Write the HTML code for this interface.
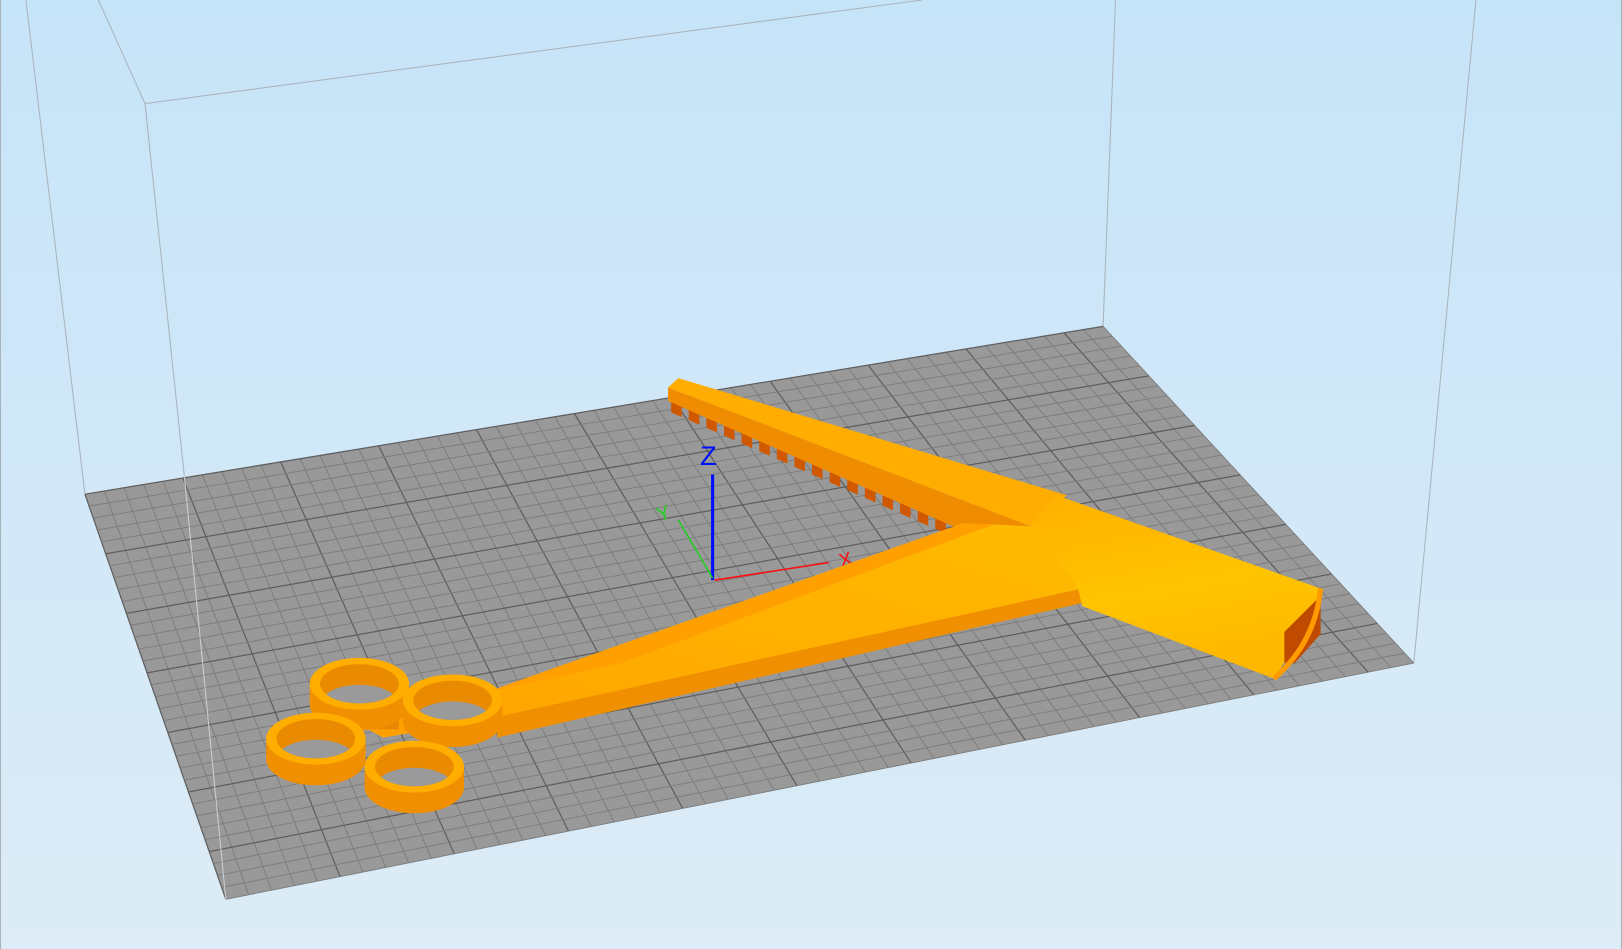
<!DOCTYPE html>
<html><head><meta charset="utf-8"><style>
html,body{margin:0;padding:0;width:1622px;height:949px;overflow:hidden}
svg{display:block}
</style></head><body>
<svg id="s" width="1622" height="949" viewBox="0 0 1566 916" preserveAspectRatio="none" xmlns="http://www.w3.org/2000/svg">
<defs>
<linearGradient id="bg" x1="0" y1="0" x2="0" y2="1"><stop offset="0" stop-color="#c6e4f8"/><stop offset="1" stop-color="#ddecf7"/></linearGradient>
<linearGradient id="cyl" x1="0" y1="0" x2="0.3" y2="1"><stop offset="0" stop-color="#ffb000"/><stop offset="0.6" stop-color="#ffc400"/><stop offset="1" stop-color="#ffb800"/></linearGradient>
<linearGradient id="arm" x1="0" y1="1" x2="1" y2="0"><stop offset="0" stop-color="#ffa600"/><stop offset="1" stop-color="#ffbb00"/></linearGradient>
</defs>
<rect width="1566" height="916" fill="url(#bg)"/>
<g stroke="#a8b4bc" stroke-width="1" fill="none">
<line x1="95" y1="0" x2="140" y2="100"/>
<line x1="140" y1="100" x2="890" y2="0"/>
<line x1="1077" y1="0" x2="1065" y2="315"/>
<line x1="1425" y1="0" x2="1365" y2="640"/>
<line x1="25" y1="0" x2="82" y2="477"/>
<line x1="140" y1="100" x2="178" y2="460"/>
<line x1="0.5" y1="0" x2="0.5" y2="916"/>
<line x1="1565.5" y1="0" x2="1565.5" y2="916"/>
</g>
<polygon points="82,477 1065,315 1365,640 218,868" fill="#999"/>
<g id="grid"></g>
<line x1="178" y1="460" x2="218" y2="868" stroke="#c8d0d6" stroke-width="1"/>
<!-- axes -->
<line x1="688" y1="458" x2="688" y2="560" stroke="#0010ff" stroke-width="3"/>
<text x="676" y="449" font-family="Liberation Sans, sans-serif" font-size="26" fill="#0010ff">Z</text>
<line x1="690" y1="560" x2="800" y2="543" stroke="#ff1010" stroke-width="1.5"/>
<text x="812" y="548" font-family="Liberation Sans, sans-serif" font-size="19" fill="#ff1010" transform="rotate(-15 812 548)">X</text>
<line x1="688" y1="558" x2="655" y2="502" stroke="#20d020" stroke-width="1.5"/>
<text x="634" y="502" font-family="Liberation Sans, sans-serif" font-size="19" fill="#20d020" transform="rotate(-20 640 495)">Y</text>
<!-- upper arm -->
<polygon id="teeth" fill="#d05800"/>
<polygon points="645,374 645,387 920,508 995,508" fill="#f08c00"/>
<polygon points="645,374 655,365 1030,478 995,508" fill="#ffad00"/>
<!-- lower arm -->
<polygon points="480,690 1045,568 1045,582 480,712" fill="#f09000"/>
<polygon points="470,668 930,505 995,508 1045,568 480,692" fill="url(#arm)"/>
<polygon points="470,668 930,505 960,506 600,640" fill="#ff9f00"/>
<!-- cylinder -->
<polygon points="995,508 1020,478 1275,568 1265,600 1230,655 1045,585 1040,565" fill="url(#cyl)"/>
<polygon points="1240,610 1275,575 1275,612 1250,640 1240,640" fill="#c04a00"/>
<path d="M1275,568 Q1270,620 1230,655" stroke="#ff9a00" stroke-width="5" fill="none"/>
<g id="rings"></g>
</svg>
<script>
var ns="http://www.w3.org/2000/svg",s=document.getElementById('s');
function el(p,t,a){var e=document.createElementNS(ns,t);for(var k in a)e.setAttribute(k,a[k]);p.appendChild(e);return e;}
var A=[82,477],B=[1065,315],C=[1365,640],D=[218,868];
function L(p,q,t){return [p[0]+(q[0]-p[0])*t,p[1]+(q[1]-p[1])*t];}
var g=document.getElementById('grid');
var NX=52,NY=34;
for(var i=0;i<=NX;i++){var t=i/NX,p=L(A,B,t),q=L(D,C,t);el(g,'line',{x1:p[0],y1:p[1],x2:q[0],y2:q[1],stroke:i%5==0?'#5e5e5e':'#7c7c7c','stroke-width':i%5==0?1.2:0.9});}
for(var j=0;j<=NY;j++){var t=j/NY,p=L(A,D,t),q=L(B,C,t);el(g,'line',{x1:p[0],y1:p[1],x2:q[0],y2:q[1],stroke:j%5==0?'#5e5e5e':'#7c7c7c','stroke-width':j%5==0?1.2:0.9});}
// teeth
var pts=[],n=16,P0=[648,387],P1=[920,507];for(var k=0;k<n;k++){var a=L(P0,P1,k/n),b=L(P0,P1,(k+0.6)/n),c=L(P0,P1,(k+1)/n);pts.push(a[0]+','+a[1],a[0]+','+(a[1]+11),b[0]+','+(b[1]+11),b[0]+','+b[1],c[0]+','+c[1]);}
pts.push(P1.join(','),P0.join(','));document.getElementById('teeth').setAttribute('points',pts.join(' '));
// rings
var R=document.getElementById('rings');
el(R,'polygon',{points:'330,690 385,680 440,700 370,712',fill:'#ffa000'});
el(R,'polygon',{points:'350,686 385,680 385,704 350,704',fill:'#e88800'});
var cs=[[347,660],[437,676],[305,713],[400,740]];
cs.forEach(function(c,i){
 var x=c[0],y=c[1],h=20;
 el(R,'ellipse',{cx:x,cy:y+h,rx:48,ry:25,fill:'#f09000'});
 el(R,'rect',{x:x-48,y:y,width:96,height:h,fill:'#f09000'});
 el(R,'ellipse',{cx:x,cy:y,rx:48,ry:25,fill:'#ffae00'});
 var cp=el(s.querySelector('defs'),'clipPath',{id:'c'+i});
 el(cp,'ellipse',{cx:x,cy:y,rx:38,ry:19});
 el(R,'ellipse',{cx:x,cy:y,rx:38,ry:19,fill:'#e98a00'});
 el(R,'ellipse',{cx:x,cy:y+h,rx:38,ry:19,fill:'#9a9a9a','clip-path':'url(#c'+i+')'});
});
</script>
</body></html>
